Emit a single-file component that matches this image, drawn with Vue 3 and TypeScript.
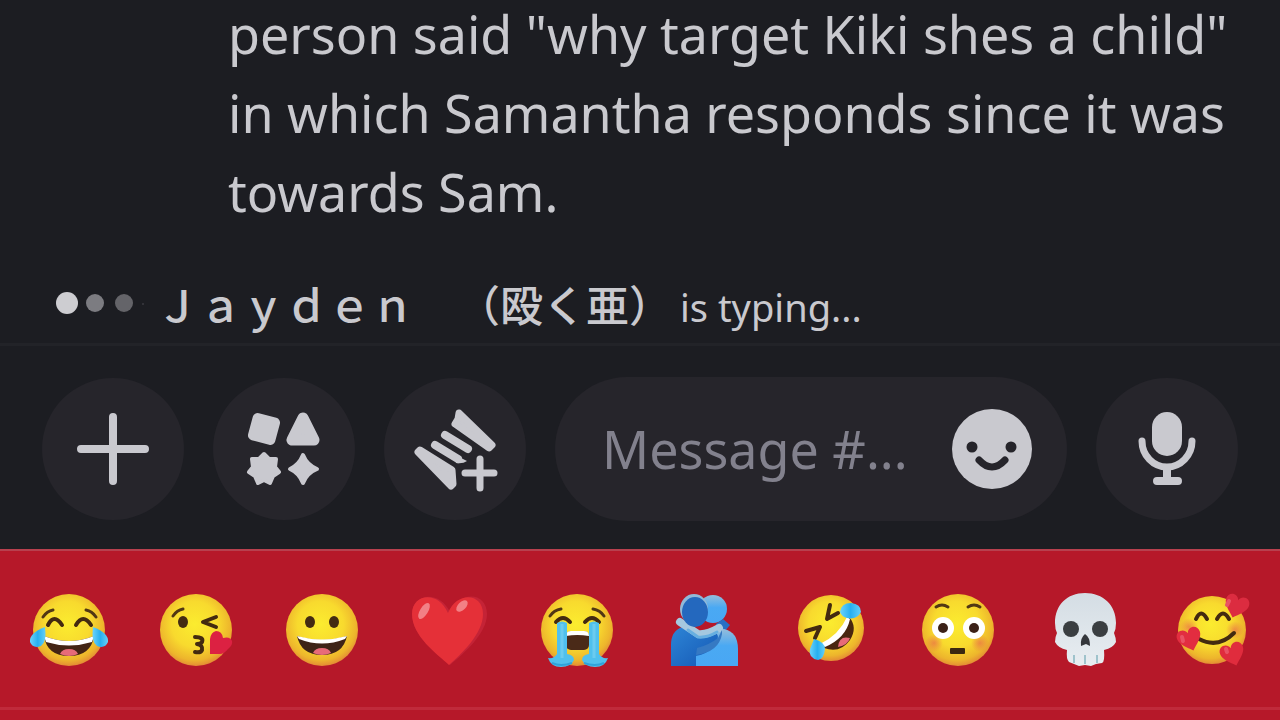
<script setup lang="ts">
import { ref } from 'vue'

const draft = ref('')
const message = 'person said "why target Kiki shes a child" in which Samantha responds since it was towards Sam.'
const typist = 'Ｊａｙｄｅｎ　（殴く亜）'
const heart = 'M0 11C-5 6 -12 1 -12 -5C-12 -13 -2 -14 0 -7C2 -14 12 -13 12 -5C12 1 5 6 0 11Z'

const emojis: string[] = [
  'Face with tears of joy',
  'Face blowing a kiss',
  'Grinning face',
  'Red heart',
  'Loudly crying face',
  'People hugging',
  'Rolling on the floor laughing',
  'Flushed face',
  'Skull',
  'Smiling face with hearts',
]
</script>

<template>
  <div class="app">
    <main class="chat">
      <p class="message">{{ message }}</p>
    </main>

    <div class="typing" role="status">
      <svg class="dots" viewBox="0 0 92 28" aria-hidden="true">
        <circle cx="13" cy="14" r="11" fill="#cdcdd1" />
        <circle cx="41" cy="14" r="9" fill="#7c7c81" />
        <circle cx="70" cy="14" r="9" fill="#646469" />
        <circle cx="89" cy="15" r="1" fill="#3a3a40" />
      </svg>
      <strong class="name">{{ typist }}</strong>
      <span class="state">is typing...</span>
    </div>

    <form class="composer" @submit.prevent>
      <button type="button" class="round" aria-label="Add attachment">
        <svg viewBox="0 0 100 100" class="icon line"><path d="M50 18V82M18 50H82" /></svg>
      </button>
      <button type="button" class="round" aria-label="Apps">
        <svg viewBox="0 0 100 100" class="icon">
          <rect x="16" y="16" width="28" height="28" rx="5" transform="rotate(15 30 30)" />
          <path class="soft-wide" d="M69 19L58 41H80Z" />
          <path class="soft" d="M30 55L35 60L42 60L41 68L45 73L39 77L36 84L30 81L24 84L21 77L15 73L19 68L18 60L25 60Z" />
          <path class="soft" d="M69 56Q73 66 83 70Q73 74 69 84Q65 74 56 70Q65 66 69 56Z" />
        </svg>
      </button>
      <button type="button" class="round" aria-label="Gift">
        <svg viewBox="0 0 100 100" class="icon">
          <path class="soft-mid" d="M54 14L87 46L84 49L50 25L53 20Z" />
          <path class="soft-mid" d="M15 51L13 53L46 87L48 85L47 71Z" />
          <path class="bar" d="M40 36L63 50M30 46L53 60" />
          <path d="M50 56L62 62Q58 65 51 64Z" />
          <path class="thin" d="M75 60V89M60 74H89" />
        </svg>
      </button>

      <div class="field">
        <input v-model="draft" type="text" aria-label="Message" placeholder="Message #..." />
        <button type="button" class="smile" aria-label="Emoji">
          <svg viewBox="0 0 80 80">
            <circle cx="40" cy="40" r="40" fill="#c9c9cf" />
            <circle cx="20" cy="38" r="5.5" fill="#25242a" />
            <circle cx="59" cy="38" r="5.5" fill="#25242a" />
            <path d="M27 51Q40 65 53 51" fill="none" stroke="#25242a" stroke-width="7" stroke-linecap="round" />
          </svg>
        </button>
      </div>

      <button type="button" class="round" aria-label="Record voice message">
        <svg viewBox="0 0 100 100" class="icon">
          <rect x="35" y="13" width="30" height="44" rx="15" />
          <path class="thin" d="M25 42A25 26 0 0 0 75 42" />
          <path class="bar" d="M50 69V81M40 82H61" />
        </svg>
      </button>
    </form>

    <nav class="emoji-bar" aria-label="Quick emojis">
      <svg class="defs" aria-hidden="true">
        <defs>
          <radialGradient id="skin" cx="48%" cy="42%" r="58%">
            <stop offset="0" stop-color="#fbec2f" />
            <stop offset=".55" stop-color="#f8da2e" />
            <stop offset=".86" stop-color="#edb52c" />
            <stop offset="1" stop-color="#e48b35" />
          </radialGradient>
          <linearGradient id="tear" x1="0" y1="0" x2="1" y2="0">
            <stop offset="0" stop-color="#6bd3fb" />
            <stop offset=".5" stop-color="#27aff0" />
            <stop offset="1" stop-color="#65cff7" />
          </linearGradient>
          <linearGradient id="hug-left" x1="0" y1="0" x2="1" y2="1">
            <stop offset="0" stop-color="#2d85d6" />
            <stop offset="1" stop-color="#1557b4" />
          </linearGradient>
          <linearGradient id="hug-right" x1="0" y1="0" x2="0" y2="1">
            <stop offset="0" stop-color="#95bddb" />
            <stop offset=".45" stop-color="#4aa9f3" />
            <stop offset="1" stop-color="#49a7f4" />
          </linearGradient>
          <linearGradient id="bone" x1="0" y1="0" x2="0" y2="1">
            <stop offset="0" stop-color="#d4dde4" />
            <stop offset="1" stop-color="#e8edf1" />
          </linearGradient>
          <radialGradient id="blush">
            <stop offset="0" stop-color="#ea7048" stop-opacity=".7" />
            <stop offset="1" stop-color="#ea7048" stop-opacity="0" />
          </radialGradient>
        </defs>
      </svg>

      <button v-for="(label, i) in emojis" :key="label" type="button" class="emoji" :aria-label="label">
        <svg viewBox="0 0 84 84">
          <template v-if="i === 0">
            <circle cx="42" cy="42" r="36" fill="url(#skin)" />
            <path class="ink" d="M16 29Q20 23 26 22M59 22Q65 23 69 29" />
            <path class="ink bold" d="M21 37Q27 25 35 37M49 37Q56 25 64 37" />
            <path d="M17 48Q42 58 67 48Q64 68 42 68Q20 68 17 48Z" fill="#432414" />
            <path d="M17 48Q42 58 67 48L65 54Q42 61 19 54Z" fill="#fff" />
            <path d="M33 66Q35 61 42 61Q49 61 51 66Q42 70 33 66Z" fill="#e76b78" />
            <path d="M18 39Q20 54 14 58Q6 61 3 54Q2 45 18 39Z" fill="url(#tear)" />
            <path d="M66 39Q64 54 70 58Q78 61 81 54Q82 45 66 39Z" fill="url(#tear)" />
          </template>

          <template v-else-if="i === 1">
            <circle cx="42" cy="42" r="36" fill="url(#skin)" />
            <path class="ink" d="M19 28Q23 22 29 21" />
            <ellipse cx="29" cy="34" rx="5" ry="6" fill="#432b12" />
            <path class="ink bold" d="M62 29L49 34L62 39" />
            <path class="ink bold" d="M41 49Q50 49 48 54Q47 56 43 56Q49 57 48 62Q47 65 41 64" />
            <path d="M56 66L56 51Q57 44 62 43Q68 43 69 50Q76 48 78 53Q79 57 74 61Q70 66 66 66Z" fill="#dc2142" />
          </template>

          <template v-else-if="i === 2">
            <circle cx="41" cy="42" r="36" fill="url(#skin)" />
            <ellipse cx="29" cy="34" rx="5" ry="6" fill="#432b12" />
            <ellipse cx="53" cy="34" rx="5" ry="6" fill="#432b12" />
            <path d="M16 48Q41 56 66 48Q62 67 41 67Q20 67 16 48Z" fill="#3e2417" />
            <path d="M16 48Q41 55 66 48L64 51Q41 60 18 51Z" fill="#fff" />
            <path d="M32 65Q34 60 41 60Q48 60 50 65Q41 69 32 65Z" fill="#e76b78" />
          </template>

          <template v-else-if="i === 3">
            <path d="M42 77C29 66 4 48 4 26C4 6 31 1 42 24C52 2 79 4 79 26C79 46 55 66 42 77Z" fill="#c42336" />
            <path d="M41 77C29 66 4 48 4 26C4 6 30 2 40 25C49 3 75 5 75 26C75 46 53 66 41 77Z" fill="#e53038" />
            <ellipse cx="16" cy="23" rx="4" ry="9" transform="rotate(32 16 23)" fill="#f28085" />
            <ellipse cx="54" cy="18" rx="4" ry="7" transform="rotate(45 54 18)" fill="#f28085" />
          </template>

          <template v-else-if="i === 4">
            <circle cx="42" cy="42" r="36" fill="url(#skin)" />
            <path class="ink" d="M15 28Q19 22 26 21M58 21Q65 22 69 28" />
            <path class="ink bold" d="M21 34Q28 26 35 34M50 34Q57 26 64 34" />
            <rect x="31" y="43" width="23" height="19" rx="5" fill="#4a2a18" />
            <path d="M31 48Q31 43 36 43H49Q54 43 54 48Q42 46 31 48Z" fill="#fff" />
            <path d="M22 35Q27 32 32 35V66Q39 67 39 72Q36 79 26 79Q16 79 13 70Q19 71 22 66Z" fill="#50c0ed" />
            <path d="M64 35Q59 32 54 35V66Q47 67 47 72Q50 79 60 79Q70 79 73 70Q67 71 64 66Z" fill="#50c0ed" />
            <path d="M27 36V70M59 36V70" stroke="#6ccbef" stroke-width="3" />
            <path d="M17 75Q26 79 37 75M49 75Q60 79 69 75" fill="none" stroke="#2fa3da" stroke-width="2" />
          </template>

          <template v-else-if="i === 5">
            <circle cx="51" cy="21" r="14" fill="url(#hug-right)" />
            <path d="M54 36L61 31L68 37L63 43H54Z" fill="#286fc4" />
            <path d="M34 78V57Q40 43 62 41Q76 44 76 61V78Z" fill="url(#hug-right)" />
            <path d="M9 78V57Q9 43 20 39L38 49L54 44Q59 51 51 59Q45 66 34 68V78Z" fill="url(#hug-left)" />
            <path d="M18 34L36 46Q45 47 57 40" fill="none" stroke="#a5c8df" stroke-width="8" stroke-linecap="round" stroke-linejoin="round" />
            <path d="M26 42L36 49Q45 50 55 44" fill="none" stroke="#67afe0" stroke-width="3" stroke-linecap="round" />
            <ellipse cx="32" cy="21" rx="14" ry="15" fill="#91b9d8" />
            <ellipse cx="33" cy="24" rx="13" ry="15" fill="#2468be" />
            <path d="M60 42L56 50Q47 57 35 60L34 67Q57 64 60 46Z" fill="#3679c3" />
          </template>

          <template v-else-if="i === 6">
            <circle cx="42" cy="40" r="33" fill="url(#skin)" />
            <path class="ink bold" d="M41 17L38 31L49 25M17 43L31 39L26 50" />
            <path d="M33 56Q54 48 60 29Q69 39 61 52Q51 66 35 60Z" fill="#49260f" />
            <path d="M31 56Q50 47 58 29L61 31Q57 50 36 59Z" fill="#fff" />
            <path d="M49 59Q50 47 61 50Q59 57 49 59Z" fill="#e76b78" />
            <path d="M51 24Q52 15 62 15Q72 16 72 24Q68 32 58 30Q53 29 51 24Z" fill="url(#tear)" />
            <path d="M25 51Q36 54 36 61Q35 71 29 72Q19 70 21 61Z" fill="url(#tear)" />
          </template>

          <template v-else-if="i === 7">
            <circle cx="42" cy="42" r="36" fill="url(#skin)" />
            <circle cx="18" cy="55" r="9" fill="url(#blush)" />
            <circle cx="64" cy="55" r="9" fill="url(#blush)" />
            <circle cx="27" cy="40" r="11" fill="#fff" />
            <circle cx="58" cy="40" r="11" fill="#fff" />
            <circle cx="27" cy="40" r="5" fill="#3c2117" />
            <circle cx="58" cy="40" r="5" fill="#3c2117" />
            <path class="ink" d="M20 19Q26 15 32 19M52 19Q58 15 64 19" />
            <rect x="34" y="60" width="15" height="6" rx="1" fill="#3a2810" />
          </template>

          <template v-else-if="i === 8">
            <path d="M42 5C60 5 73 17 73 35Q73 41 71 45Q73 50 73 54Q70 60 61 62Q62 74 59 75L53 76L48 78L42 77L36 78L31 76L26 74Q23 71 24 62Q15 60 12 54Q12 49 14 45Q12 41 12 35C12 17 24 5 42 5Z" fill="url(#bone)" />
            <circle cx="28" cy="41" r="8" fill="#3a3e41" />
            <circle cx="57" cy="41" r="8" fill="#3a3e41" />
            <path d="M42 46Q47 49 47 58L43 56L38 58Q37 50 42 46Z" fill="#34373b" />
            <path d="M31 67V75M42 67V76M54 67V75" stroke="#9fc3cc" stroke-width="2" />
          </template>

          <template v-else>
            <circle cx="42" cy="42" r="34" fill="url(#skin)" />
            <circle cx="19" cy="39" r="9" fill="url(#blush)" />
            <circle cx="65" cy="42" r="9" fill="url(#blush)" />
            <path class="ink bold" d="M26 31Q31 20 37 31M47 31Q53 20 59 31" />
            <path class="ink bold" d="M29 51Q48 61 64 45" />
            <path :d="heart" transform="translate(66 19) rotate(18)" fill="#dc2c40" />
            <path :d="heart" transform="translate(20 52) rotate(-18)" fill="#e22d40" />
            <path :d="heart" transform="translate(63 67) rotate(-18)" fill="#e02c3d" />
            <path d="M59 13L57 17M12 49L13 53M56 61L57 64" stroke="#e95264" stroke-width="4" stroke-linecap="round" />
          </template>
        </svg>
      </button>
    </nav>
  </div>
</template>

<style>
body {
  margin: 0;
  background: #1c1d22;
}
</style>

<style scoped>
.app {
  min-height: 100vh;
  display: flex;
  flex-direction: column;
  background: #1c1d22;
  color: #c9c9ce;
  font-family: "Noto Sans", "Noto Sans CJK JP", sans-serif;
}
.chat {
  flex: 1;
  display: flex;
  flex-direction: column;
  justify-content: flex-end;
  padding: 0 40px 37px 228px;
}
.message {
  margin: -8px 0 0;
  font-size: 52px;
  line-height: 79px;
}
.typing {
  display: flex;
  align-items: center;
  height: 64px;
  padding: 3px 54px 8px;
  white-space: nowrap;
}
.dots {
  width: 92px;
  height: 28px;
  margin-right: 10px;
}
.name {
  font-family: "Noto Sans CJK JP", sans-serif;
  font-size: 43px;
  font-weight: 500;
  line-height: 64px;
  text-spacing-trim: space-all;
}
.state {
  padding: 8px 0 0 8px;
  font-size: 38px;
  line-height: 56px;
}
.composer {
  display: flex;
  align-items: center;
  gap: 29px;
  height: 200px;
  padding: 3px 42px 0;
  border-top: 3px solid #222328;
}
button {
  display: flex;
  align-items: center;
  justify-content: center;
  padding: 0;
  border: 0;
  background: none;
  cursor: pointer;
}
.round {
  flex: none;
  width: 142px;
  height: 142px;
  border-radius: 50%;
  background: #26252b;
}
.icon {
  width: 100px;
  height: 100px;
  fill: #c9c9cf;
  stroke: #c9c9cf;
  stroke-width: 0;
  stroke-linecap: round;
  stroke-linejoin: round;
}
.line {
  stroke-width: 8;
}
.soft {
  stroke-width: 4;
}
.soft-mid {
  stroke-width: 7;
}
.soft-wide {
  stroke-width: 11;
}
.thin {
  fill: none;
  stroke-width: 7;
}
.bar {
  fill: none;
  stroke-width: 8;
}
.field {
  flex: 1;
  min-width: 0;
  display: flex;
  align-items: center;
  box-sizing: border-box;
  height: 144px;
  padding: 0 35px 0 47px;
  border-radius: 72px;
  background: #26252b;
}
.field input {
  flex: 1;
  min-width: 0;
  padding: 0 0 2px;
  border: 0;
  outline: 0;
  background: none;
  color: #c9c9ce;
  font: inherit;
  font-size: 52px;
  line-height: 79px;
}
.field input::placeholder {
  color: #82818d;
  opacity: 1;
}
.smile,
.smile svg {
  flex: none;
  width: 80px;
  height: 80px;
}
.emoji-bar {
  display: grid;
  grid-template-columns: repeat(10, 1fr);
  height: 154px;
  padding: 2px 5px 0;
  border-top: 2px solid #b8404e;
  border-bottom: 3px solid #c02a3b;
  margin-bottom: 10px;
  background: #b61829;
  box-shadow: 0 10px #b61829;
}
.defs {
  position: absolute;
  width: 0;
  height: 0;
}
.emoji svg {
  width: 84px;
  height: 84px;
}
.ink {
  fill: none;
  stroke: #513714;
  stroke-width: 3;
  stroke-linecap: round;
  stroke-linejoin: round;
}
.bold {
  stroke: #432a10;
  stroke-width: 4;
}
</style>
